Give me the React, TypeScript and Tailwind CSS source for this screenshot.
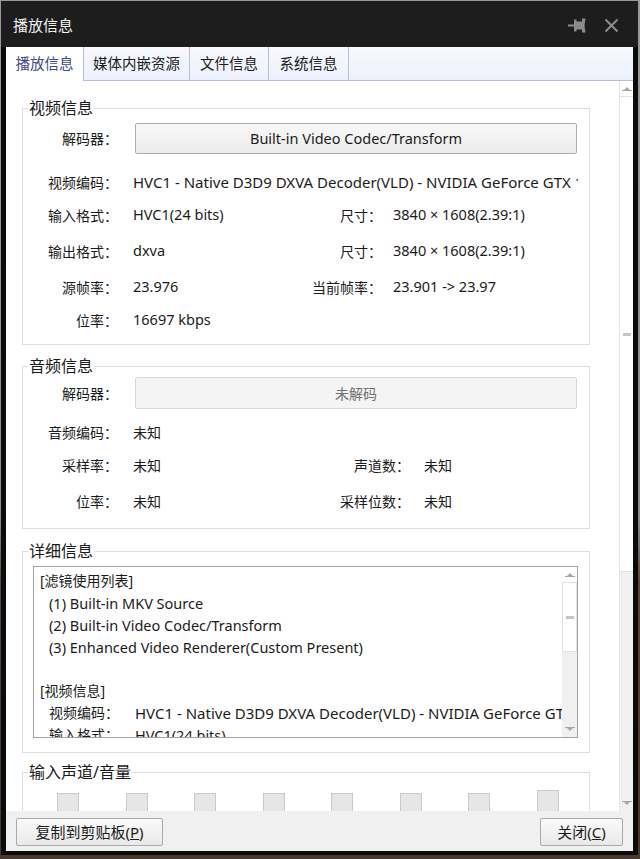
import React from "react";

const FONT = "font-['Noto_Sans','Noto_Sans_CJK_SC',sans-serif]";
const LBL = "w-[95px] text-right shrink-0 text-[14px] whitespace-nowrap";

function UpArrow() {
  return (
    <svg width="10" height="7" viewBox="0 0 10 7">
      <polygon points="2,5 5,2 8,5" fill="#a6a6a6" />
      <rect x="0" y="5" width="10" height="1" fill="#a6a6a6" />
    </svg>
  );
}

function DownArrow() {
  return (
    <svg width="10" height="7" viewBox="0 0 10 7">
      <rect x="0" y="1" width="10" height="1" fill="#a6a6a6" />
      <polygon points="2,2 5,5 8,2" fill="#a6a6a6" />
    </svg>
  );
}

function Grip() {
  return <div className="w-[8px] h-[3px] bg-[#c4c4c4]" />;
}

function PinIcon() {
  return (
    <svg width="18" height="15" viewBox="0 0 18 15">
      <rect x="0" y="6.5" width="6" height="2" fill="#8a8a8a" />
      <rect x="6" y="1.5" width="2.5" height="12" fill="#8a8a8a" />
      <rect x="8" y="3.5" width="7" height="8" fill="#8a8a8a" />
      <polygon points="14,0.5 17.5,0.5 16.5,7.5 17.5,14.5 14,14.5" fill="#8a8a8a" />
    </svg>
  );
}

function CloseIcon() {
  return (
    <svg width="15" height="15" viewBox="0 0 15 15">
      <path d="M1.5 1.5 L13.5 13.5 M13.5 1.5 L1.5 13.5" stroke="#8c8c8c" strokeWidth="2" />
    </svg>
  );
}

function Legend({ children }: { children: React.ReactNode }) {
  return (
    <legend className="ml-[5px] px-[1px] text-[16px] leading-[20px] text-[#1a1a1a]">
      {children}
    </legend>
  );
}

function Bar({ tall }: { tall?: boolean }) {
  return tall ? (
    <div className="w-[22px] h-[43px] -mt-[3px] bg-[#e6e6e6] border border-[#cacaca]" />
  ) : (
    <div className="w-[22px] h-[40px] bg-[#e6e6e6] border border-[#cacaca]" />
  );
}

export default function App() {
  return (
    <div
      className={`${FONT} relative w-[640px] h-[859px] overflow-hidden bg-[linear-gradient(to_bottom,#9a9a9a_0%,#8e8e8e_60%,#5c4736_68%,#4a3829_100%)] text-[14.5px] text-[#1b1b1b]`}
    >
      <div className="ml-[1px] mt-[1px] w-[637px] h-[854px] bg-[#0b0b0b] flex flex-col px-[5px] pb-[4px]">
        {/* Title bar */}
        <div className="h-[46px] shrink-0 bg-[#1d1d1d] -mx-[5px] flex items-center pl-[12px] pr-[19px]">
          <div className="text-[15px] text-[#f2f2f2] pt-[2px]">播放信息</div>
          <div className="flex-1" />
          <div className="flex items-center gap-[18px] pt-[2px]">
            <PinIcon />
            <CloseIcon />
          </div>
        </div>

        {/* Content panel */}
        <div className="flex-1 flex flex-col bg-white overflow-hidden">
          {/* Tabs */}
          <div className="h-[34px] shrink-0 flex text-[14.5px] bg-[linear-gradient(to_bottom,#f8f9fe,#edf0fc)]">
            <div className="w-[78px] h-full bg-white border-r border-[#b3bee3] flex items-center justify-center text-[#3a4a8c]">
              播放信息
            </div>
            <div className="w-[106px] h-full border-r border-b border-[#b3bee3] flex items-center justify-center">
              媒体内嵌资源
            </div>
            <div className="w-[79px] h-full border-r border-b border-[#b3bee3] flex items-center justify-center">
              文件信息
            </div>
            <div className="w-[80px] h-full border-r border-b border-[#b3bee3] flex items-center justify-center">
              系统信息
            </div>
            <div className="flex-1 h-full border-b border-[#b3bee3]" />
          </div>

          {/* Scroll area */}
          <div className="h-[730px] shrink-0 flex overflow-hidden">
            <div className="w-[613px] shrink-0 overflow-hidden flex flex-col pl-[16px]">
              {/* 视频信息 */}
              <fieldset className="mt-[17px] w-[568px] shrink-0 border border-[#dedede] pb-[12px]">
                <Legend>视频信息</Legend>
                <div className="flex items-center mt-[5px]">
                  <div className={LBL}>解码器：</div>
                  <div className="ml-[17px] w-[442px] h-[31px] shrink-0 rounded-[2px] border border-[#adadad] bg-[linear-gradient(to_bottom,#f8f8f8,#ececec)] flex items-center justify-center">
                    Built-in Video Codec/Transform
                  </div>
                </div>
                <div className="flex items-center h-[24px] mt-[16px]">
                  <div className={LBL}>视频编码：</div>
                  <div className="ml-[15px] w-[445px] shrink-0 overflow-hidden whitespace-nowrap text-[15px]">
                    HVC1 - Native D3D9 DXVA Decoder(VLD) - NVIDIA GeForce GTX 1070
                  </div>
                </div>
                <div className="flex items-center h-[24px] mt-[9px]">
                  <div className={LBL}>输入格式：</div>
                  <div className="ml-[15px] w-[160px] shrink-0 whitespace-nowrap">HVC1(24 bits)</div>
                  <div className="w-[89px] text-right shrink-0 text-[14px]">尺寸：</div>
                  <div className="ml-[11px] whitespace-nowrap">3840 × 1608(2.39:1)</div>
                </div>
                <div className="flex items-center h-[24px] mt-[12px]">
                  <div className={LBL}>输出格式：</div>
                  <div className="ml-[15px] w-[160px] shrink-0 whitespace-nowrap">dxva</div>
                  <div className="w-[89px] text-right shrink-0 text-[14px]">尺寸：</div>
                  <div className="ml-[11px] whitespace-nowrap">3840 × 1608(2.39:1)</div>
                </div>
                <div className="flex items-center h-[24px] mt-[12px]">
                  <div className={LBL}>源帧率：</div>
                  <div className="ml-[15px] w-[160px] shrink-0 whitespace-nowrap">23.976</div>
                  <div className="w-[89px] text-right shrink-0 whitespace-nowrap text-[14px]">当前帧率：</div>
                  <div className="ml-[11px] whitespace-nowrap">23.901 -&gt; 23.97</div>
                </div>
                <div className="flex items-center h-[24px] mt-[9px]">
                  <div className={LBL}>位率：</div>
                  <div className="ml-[15px] whitespace-nowrap">16697 kbps</div>
                </div>
              </fieldset>

              {/* 音频信息 */}
              <fieldset className="mt-[11px] w-[568px] shrink-0 border border-[#dedede] pb-[15px]">
                <Legend>音频信息</Legend>
                <div className="flex items-center mt-[1px]">
                  <div className={LBL}>解码器：</div>
                  <div className="ml-[17px] w-[442px] h-[32px] shrink-0 rounded-[2px] border border-[#d9d9d9] bg-[#f4f4f4] flex items-center justify-center text-[#707070] text-[14px]">
                    未解码
                  </div>
                </div>
                <div className="flex items-center h-[24px] mt-[11px] text-[14px]">
                  <div className={LBL}>音频编码：</div>
                  <div className="ml-[15px] whitespace-nowrap">未知</div>
                </div>
                <div className="flex items-center h-[24px] mt-[9px] text-[14px]">
                  <div className={LBL}>采样率：</div>
                  <div className="ml-[15px] w-[160px] shrink-0">未知</div>
                  <div className="w-[117px] text-right shrink-0">声道数：</div>
                  <div className="ml-[14px]">未知</div>
                </div>
                <div className="flex items-center h-[24px] mt-[12px] text-[14px]">
                  <div className={LBL}>位率：</div>
                  <div className="ml-[15px] w-[160px] shrink-0">未知</div>
                  <div className="w-[117px] text-right shrink-0">采样位数：</div>
                  <div className="ml-[14px]">未知</div>
                </div>
              </fieldset>

              {/* 详细信息 */}
              <fieldset className="mt-[12px] w-[568px] shrink-0 border border-[#dedede] pb-[14px]">
                <Legend>详细信息</Legend>
                <div className="ml-[10px] mt-[5px] w-[545px] h-[172px] border border-[#a3a3a3] flex overflow-hidden">
                  <div className="flex-1 min-w-0 overflow-hidden pt-[3px] pl-[6px] leading-[22px] whitespace-nowrap">
                    <div className="text-[14px]">[滤镜使用列表]</div>
                    <div className="pl-[9px]">(1) Built-in MKV Source</div>
                    <div className="pl-[9px]">(2) Built-in Video Codec/Transform</div>
                    <div className="pl-[9px]">(3) Enhanced Video Renderer(Custom Present)</div>
                    <div className="h-[22px]" />
                    <div className="text-[14px]">[视频信息]</div>
                    <div className="pl-[9px] flex">
                      <span className="w-[86px] shrink-0 text-[14px]">视频编码：</span>
                      <span className="text-[15px]">HVC1 - Native D3D9 DXVA Decoder(VLD) - NVIDIA GeForce GTX 1070</span>
                    </div>
                    <div className="pl-[9px] flex">
                      <span className="w-[86px] shrink-0 text-[14px]">输入格式：</span>
                      <span>HVC1(24 bits)</span>
                    </div>
                  </div>
                  <div className="w-[15px] shrink-0 flex flex-col">
                    <div className="h-[15px] flex items-center justify-center bg-white">
                      <UpArrow />
                    </div>
                    <div className="h-[70px] bg-white border border-[#e2e2e2] flex items-center justify-center">
                      <Grip />
                    </div>
                    <div className="flex-1 bg-[#f0f0f0]" />
                    <div className="h-[15px] flex items-center justify-center bg-[#f0f0f0]">
                      <DownArrow />
                    </div>
                  </div>
                </div>
              </fieldset>

              {/* 输入声道/音量 */}
              <fieldset className="mt-[9px] w-[568px] shrink-0 border border-[#dedede] h-[80px]">
                <Legend>输入声道/音量</Legend>
                <div className="flex items-start gap-[46.5px] pl-[34px] mt-[11px]">
                  <Bar />
                  <Bar />
                  <Bar />
                  <Bar />
                  <Bar />
                  <Bar />
                  <Bar />
                  <Bar tall />
                </div>
              </fieldset>
            </div>

            {/* main scrollbar */}
            <div className="w-[14px] shrink-0 flex flex-col border-l border-[#e6e6e6]">
              <div className="h-[15px] flex items-center justify-center bg-white">
                <UpArrow />
              </div>
              <div className="h-[476px] bg-white border-y border-[#e2e2e2] flex items-center justify-center">
                <Grip />
              </div>
              <div className="flex-1 bg-[#f0f0f0]" />
              <div className="h-[15px] flex items-center justify-center bg-[#f0f0f0]">
                <DownArrow />
              </div>
            </div>
          </div>

          {/* Bottom bar */}
          <div className="flex-1 bg-[#f0f0f0] flex items-start justify-between pl-[10px] pr-[10px] pt-[7px]">
            <div className="w-[147px] h-[28px] rounded-[2px] border border-[#a9a9a9] bg-[linear-gradient(to_bottom,#fafafa,#e9e9e9)] flex items-center justify-center text-[15px]">
              复制到剪贴板(<span className="underline">P</span>)
            </div>
            <div className="w-[83px] h-[28px] rounded-[2px] border border-[#a9a9a9] bg-[linear-gradient(to_bottom,#fafafa,#e9e9e9)] flex items-center justify-center text-[15px]">
              关闭(<span className="underline">C</span>)
            </div>
          </div>
        </div>
      </div>
    </div>
  );
}
